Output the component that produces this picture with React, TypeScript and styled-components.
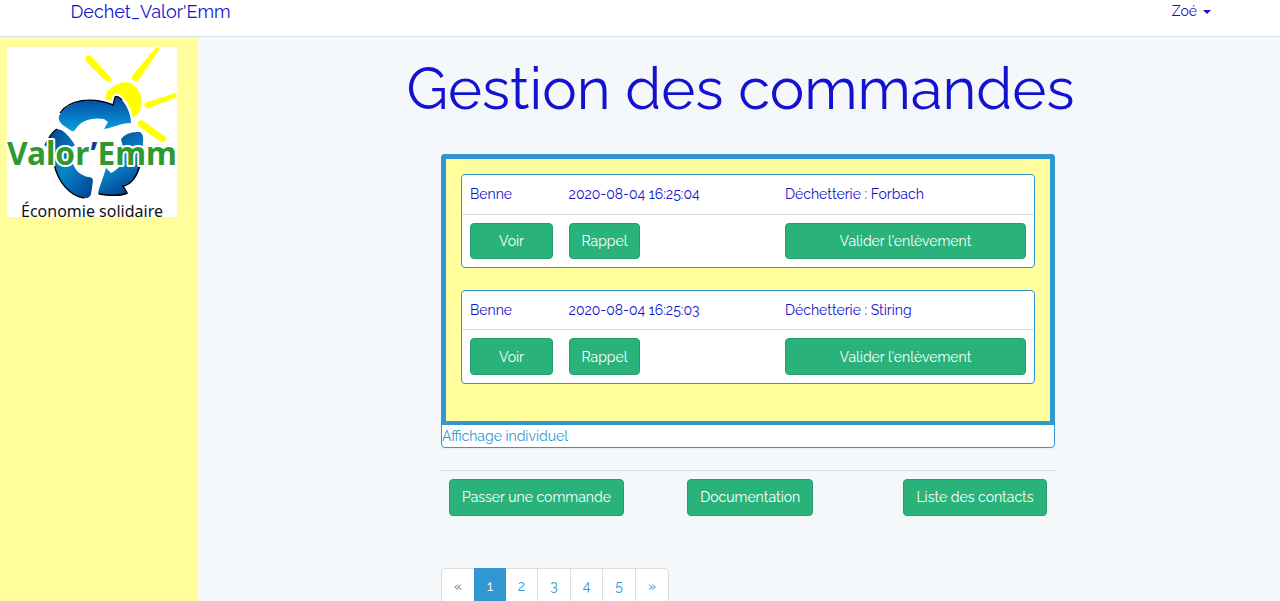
import React from "react";
import styled, { createGlobalStyle } from "styled-components";

const GlobalStyle = createGlobalStyle`
  * { box-sizing: border-box; }
  html, body { margin: 0; height: 601px; overflow: hidden; }
  body {
    background: #f5f8fa;
    color: #1212cf;
    font: 14px/22.4px Raleway, Lato, "Open Sans", sans-serif;
  }
`;

const Navbar = styled.nav`
  display: flex;
  justify-content: space-between;
  height: 37px;
  padding: 0 69px 0 70.5px;
  background: #fff;
  border-bottom: 1px solid #d3e0e9;
`;

const Brand = styled.a`
  font-size: 18px;
  line-height: 23px;
`;

const UserMenu = styled.a`
  display: flex;
  align-items: center;
  gap: 6px;
  height: 22px;
`;

const Caret = styled.span`
  margin-top: 2px;
  border-top: 4px solid #1212cf;
  border-left: 4px solid transparent;
  border-right: 4px solid transparent;
`;

const Page = styled.div`
  display: flex;
  height: 564px;
`;

const Sidebar = styled.aside`
  flex: 0 0 198px;
  padding: 10px 7px;
  background: #fffd9c;
`;

const LogoSvg = styled.svg`
  display: block;
  overflow: visible;
  background: #fff;
`;

const Main = styled.main`
  flex: 1;
  display: flex;
  flex-direction: column;
`;

const Title = styled.h1`
  flex: none;
  margin: 20px 0 0 208.5px;
  height: 97.1px;
  font-size: 58px;
  line-height: 64px;
  font-weight: 400;
  white-space: nowrap;
`;

const Content = styled.section`
  flex: none;
  width: 614px;
  margin-left: 243px;
`;

const Panel = styled.div`
  height: 294px;
  background: #fff;
  border: 1px solid #3097d1;
  border-radius: 4px;
  box-shadow: 0 1px 1px rgba(0, 0, 0, 0.05);
`;

const PanelBody = styled.div`
  display: flex;
  flex-direction: column;
  gap: 22px;
  height: 271px;
  margin: -1px -1px 0;
  padding: 15px;
  background: #fffd9c;
  border: 5px solid #3097d1;
  border-bottom-width: 4px;
  border-radius: 4px 4px 0 0;
`;

const ViewLink = styled.a`
  display: block;
  color: #3097d1;
`;

const Order = styled.article`
  height: 93.8px;
  background: #fff;
  border: 1px solid #3097d1;
  border-radius: 4px;
`;

const OrderRow = styled.div<{ $divided?: boolean }>`
  display: grid;
  grid-template-columns: 98.6px 216.4px 1fr;
  padding: 8px 0;
  border-top: ${(p) => (p.$divided ? "1px solid #ddd" : "0")};
`;

const Cell = styled.div`
  padding: 0 8px;
  white-space: nowrap;
`;

const Button = styled.button<{ $width: string; $tall?: boolean }>`
  display: block;
  width: ${(p) => p.$width};
  height: ${(p) => (p.$tall ? 37 : 36.4)}px;
  padding: ${(p) => (p.$tall ? "0" : "1.2px 0 0")};
  color: #fff;
  background: #2ab27b;
  border: 1px solid #259d6d;
  border-radius: 4px;
  font: inherit;
  text-align: center;
  white-space: nowrap;
`;

const Actions = styled.div`
  display: grid;
  grid-template-columns: 238px 216px 144px;
  margin-top: 22px;
  padding: 8px;
  border-top: 1px solid #ddd;
`;

const Pagination = styled.ul`
  display: flex;
  width: 228px;
  margin: 44px 0 0;
  padding: 0;
  list-style: none;
  background: #fff;
  border: 1px solid #ddd;
  border-radius: 4px;
`;

const PageItem = styled.li<{ $state?: "active" | "disabled"; $wide?: boolean }>`
  flex: 0 0 ${(p) => (p.$wide ? 33 : 32)}px;
  height: 36px;
  line-height: 34px;
  text-align: center;
  color: ${(p) => (p.$state === "active" ? "#fff" : p.$state === "disabled" ? "#777" : "#3097d1")};
  background: ${(p) => (p.$state === "active" ? "#3097d1" : "transparent")};
  box-shadow: ${(p) => (p.$state === "active" ? "0 -1px #3097d1" : "none")};
  border-right: ${(p) => (p.$state ? "0" : "1px solid #ddd")};
  &:last-child { border-right: 0; }
`;

function Logo() {
  return (
    <LogoSvg width="170" height="170" viewBox="0 0 170 170">
      <defs>
        <linearGradient id="top" x1="0" y1="0" x2="0" y2="1">
          <stop offset="0" stopColor="#0345a0" />
          <stop offset="1" stopColor="#0aa0dc" />
        </linearGradient>
        <linearGradient id="left" x1="0" y1="0" x2="1" y2="1">
          <stop offset="0.1" stopColor="#044a96" />
          <stop offset="0.5" stopColor="#0787c9" />
          <stop offset="1" stopColor="#043d93" />
        </linearGradient>
        <linearGradient id="right" x1="0.2" y1="0" x2="0.6" y2="1">
          <stop offset="0" stopColor="#064694" />
          <stop offset="0.5" stopColor="#0888c8" />
          <stop offset="1" stopColor="#053e8f" />
        </linearGradient>
      </defs>
      <g fill="#ff0" stroke="#ff0" strokeWidth="1" strokeLinejoin="round">
        <path d="M99 52C98 43 107 39 115 36C124 34 134 42 134 54C135 61 131 67 126 71Z" />
        <path d="M79 10Q81 7 84 10L104 31Q104 35 101 34L96 31L79 14Z" />
        <path d="M149 1Q151 0 152 2L131 33Q126 36 125 30L134 19Z" />
        <path d="M167 47Q170 46 169 50L141 61Q136 60 139 56Z" />
        <path d="M131 75Q133 72 137 75L158 90Q160 94 155 95L132 79Z" />
      </g>
      <path d="M52 69C59 55 83 48 106 57L108 50Q110 47 115 53C121 60 124 69 124 76C113 76 105 81 97 82L101 75L97 72C85 70 74 73 68 83Q66 86 60 81C54 77 51 74 52 69Z" fill="url(#top)" stroke="#fff" strokeWidth="5" strokeLinejoin="round" style={{ paintOrder: "stroke" }} />
      <path d="M53 66C62 53 84 49 106 58L108 50Q110 48 115 53" fill="none" stroke="#000" strokeWidth="1.3" />
      <path d="M50 82Q45 84 38 99L47 103L46 113C50 134 62 147 76 151Q83 152 84 147L86 134Q86 130 81 130C73 128 69 124 66 117L65 100L68 98C63 91 57 82 50 82Z" fill="url(#left)" />
      <path d="M50 82Q45 84 38 98M47 117C51 135 63 149 77 151" fill="none" stroke="#000" strokeWidth="1.3" />
      <path d="M114 92Q120 84 133 85Q137 87 136 96L134 117C131 127 126 136 116 139L120 147Q111 151 91 147C92 140 96 132 99 121L104 126C112 122 117 116 117 105Z" fill="url(#right)" />
      <path d="M133 117C130 131 123 138 116 139L120 146Q111 150 92 147" fill="none" stroke="#000" strokeWidth="1.5" />
      <text
        x="0"
        y="118"
        fill="#2f982f"
        fontFamily="'Noto Sans', 'Open Sans', sans-serif"
        fontSize="33"
        fontWeight="700"
        stroke="#fff"
        strokeWidth="4"
        strokeLinejoin="round"
        textLength="170"
        lengthAdjust="spacingAndGlyphs"
        style={{ paintOrder: "stroke" }}
      >
        Valor<tspan fill="#0a3f9c">’</tspan>Emm
      </text>
      <text
        x="14"
        y="169.5"
        fill="#111"
        fontFamily="'Noto Sans', 'Open Sans', sans-serif"
        fontSize="16"
        textLength="142"
        lengthAdjust="spacingAndGlyphs"
      >
        Économie solidaire
      </text>
    </LogoSvg>
  );
}

const orders = [
  { date: "2020-08-04 16:25:04", site: "Forbach" },
  { date: "2020-08-04 16:25:03", site: "Stiring" },
];

export default function App() {
  return (
    <>
      <GlobalStyle />
      <Navbar>
        <Brand>Dechet_Valor'Emm</Brand>
        <UserMenu>Zoé<Caret /></UserMenu>
      </Navbar>
      <Page>
        <Sidebar><Logo /></Sidebar>
        <Main>
          <Title>Gestion des commandes</Title>
          <Content>
            <Panel>
              <PanelBody>
                {orders.map((o) => (
                  <Order key={o.date}>
                    <OrderRow>
                      <Cell>Benne</Cell>
                      <Cell>{o.date}</Cell>
                      <Cell>Déchetterie : {o.site}</Cell>
                    </OrderRow>
                    <OrderRow $divided>
                      <Cell><Button $width="83px">Voir</Button></Cell>
                      <Cell><Button $width="71.8px">Rappel</Button></Cell>
                      <Cell><Button $width="100%">Valider l'enlèvement</Button></Cell>
                    </OrderRow>
                  </Order>
                ))}
              </PanelBody>
              <ViewLink>Affichage individuel</ViewLink>
            </Panel>
            <Actions>
              <Button $tall $width="175px">Passer une commande</Button>
              <Button $tall $width="126.4px">Documentation</Button>
              <Button $tall $width="144px">Liste des contacts</Button>
            </Actions>
            <Pagination>
              <PageItem $state="disabled">«</PageItem>
              <PageItem $state="active">1</PageItem>
              <PageItem>2</PageItem>
              <PageItem $wide>3</PageItem>
              <PageItem>4</PageItem>
              <PageItem $wide>5</PageItem>
              <PageItem>»</PageItem>
            </Pagination>
          </Content>
        </Main>
      </Page>
    </>
  );
}
